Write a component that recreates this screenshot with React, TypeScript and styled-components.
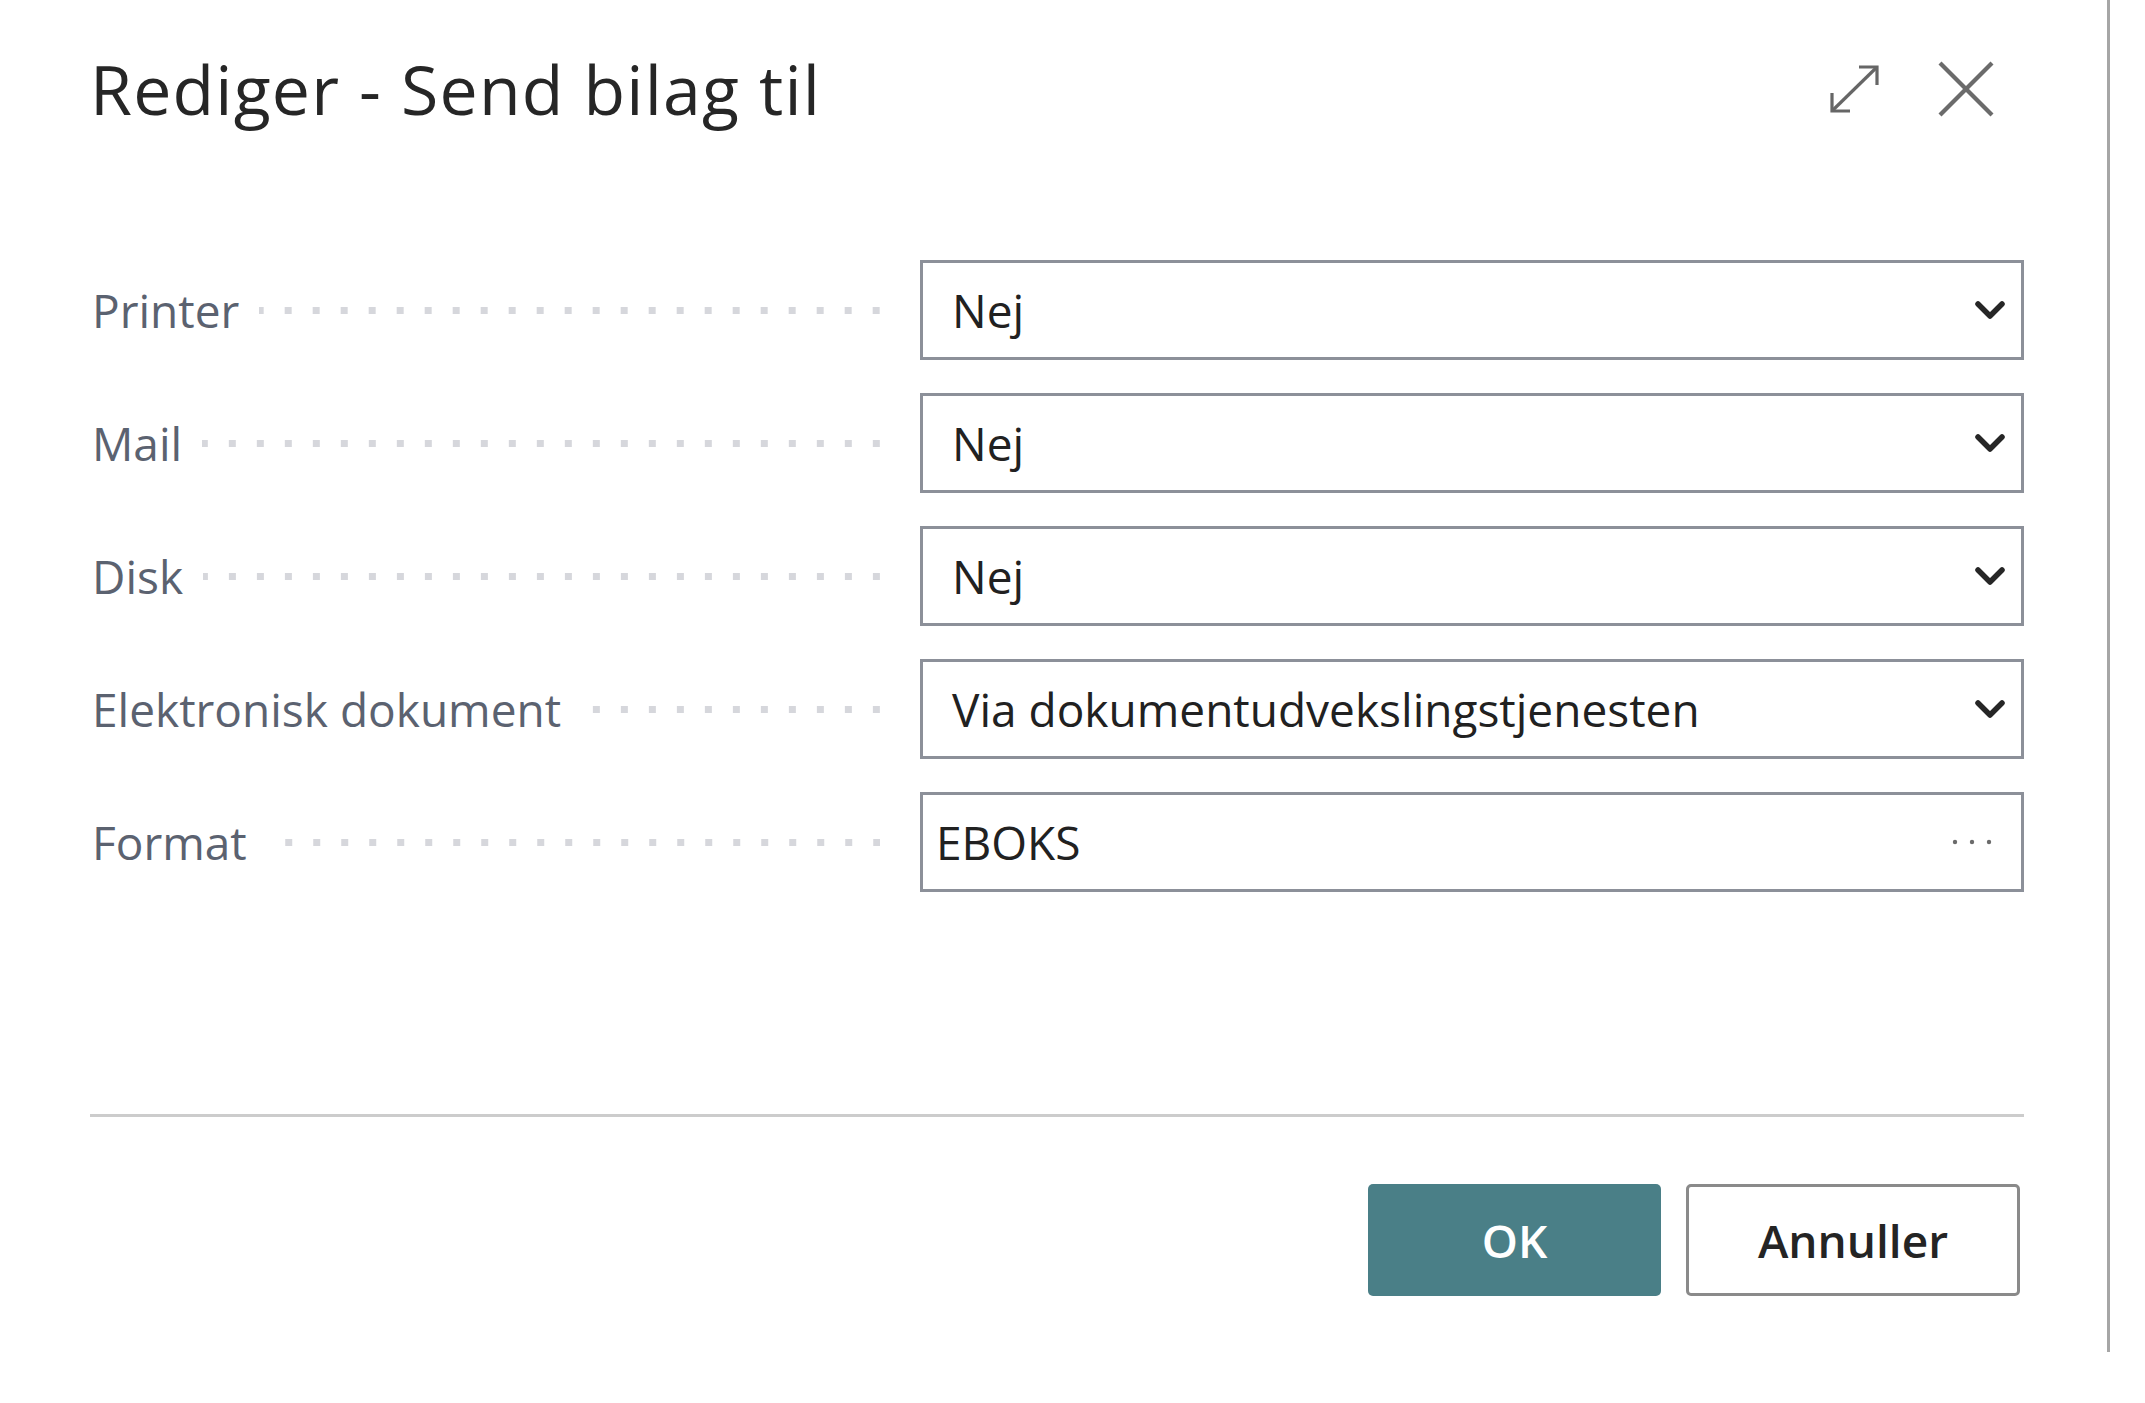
import React from 'react';
import styled, { createGlobalStyle } from 'styled-components';

const GlobalStyle = createGlobalStyle`
  html, body {
    margin: 0;
    padding: 0;
    background: #ffffff;
  }
  body {
    font-family: "Open Sans", "Noto Sans", "Liberation Sans", sans-serif;
  }
`;

const Page = styled.div`
  width: 2145px;
  height: 1403px;
  background: #ffffff;
  overflow: hidden;
`;

const Dialog = styled.div`
  box-sizing: border-box;
  width: 2110px;
  height: 1352px;
  border-right: 3px solid #a6a6a6;
  padding: 0 83px 0 92px;
  display: flex;
  flex-direction: column;
`;

const Header = styled.div`
  display: flex;
  align-items: center;
  justify-content: space-between;
  padding-top: 55px;
`;

const Title = styled.h1`
  margin: 0 0 0 -2px;
  font-size: 68px;
  line-height: 67px;
  font-weight: 400;
  letter-spacing: 1.2px;
  color: #262626;
`;

const HeaderIcons = styled.div`
  display: flex;
  align-items: center;
  gap: 58px;
  margin-right: 30px;
`;

const IconButton = styled.button`
  display: flex;
  align-items: center;
  justify-content: center;
  padding: 0;
  border: none;
  background: transparent;
  cursor: pointer;
`;

const Form = styled.div`
  display: flex;
  flex-direction: column;
  gap: 33px;
  margin-top: 138px;
`;

const Row = styled.div`
  display: grid;
  grid-template-columns: 1fr 1104px;
  height: 100px;
`;

const LabelCell = styled.div`
  display: flex;
  align-items: center;
  padding-right: 40px;
`;

const Label = styled.span`
  font-size: 46px;
  color: #5b6270;
  white-space: nowrap;
`;

const Leader = styled.span`
  flex: 1;
  height: 7px;
  margin-left: 20px;
  background-image: linear-gradient(to right, transparent 21px, #d6d7dc 21px);
  background-size: 28px 7px;
  background-position: right center;
  background-repeat: repeat-x;
`;

const Field = styled.div<{ $lookup?: boolean }>`
  box-sizing: border-box;
  height: 100px;
  display: flex;
  align-items: center;
  border: 3px solid #8c9099;
  padding: ${p => (p.$lookup ? '0 29px 0 13px' : '0 15px 0 29px')};
  background: #ffffff;
`;

const Value = styled.span`
  flex: 1;
  font-size: 46px;
  color: #212121;
  white-space: nowrap;
`;

const Separator = styled.div`
  height: 3px;
  background: #cccccc;
  margin: 222px 0 0 -2px;
`;

const Buttons = styled.div`
  display: flex;
  justify-content: flex-end;
  gap: 25px;
  margin-top: 67px;
  padding-right: 4px;
`;

const Button = styled.button<{ $primary?: boolean }>`
  box-sizing: border-box;
  height: 112px;
  width: ${p => (p.$primary ? '293px' : '334px')};
  border-radius: 5px;
  border: ${p => (p.$primary ? 'none' : '3px solid #8a8a8a')};
  background: ${p => (p.$primary ? '#4a7f87' : '#ffffff')};
  color: ${p => (p.$primary ? '#ffffff' : '#242424')};
  font-family: "Open Sans", "Noto Sans", sans-serif;
  font-size: 46px;
  font-weight: 600;
  cursor: pointer;
`;

const Chevron = () => (
  <svg width="32" height="20" viewBox="0 0 32 20">
    <polyline points="4,4 16,16 28,4" fill="none" stroke="#262626" strokeWidth="5.5" strokeLinecap="round" strokeLinejoin="round" />
  </svg>
);

const Ellipsis = () => (
  <svg width="40" height="6" viewBox="0 0 40 6">
    <circle cx="3" cy="3" r="2.2" fill="#6b6b6b" />
    <circle cx="20" cy="3" r="2.2" fill="#6b6b6b" />
    <circle cx="37" cy="3" r="2.2" fill="#6b6b6b" />
  </svg>
);

const ExpandIcon = () => (
  <svg width="51" height="50" viewBox="0 0 51 50">
    <g fill="none" stroke="#666666" strokeWidth="3.2">
      <line x1="4" y1="46" x2="47" y2="4" />
      <polyline points="30,3 48,3 48,21" />
      <polyline points="3,29 3,47 21,47" />
    </g>
  </svg>
);

const CloseIcon = () => (
  <svg width="56" height="56" viewBox="0 0 56 56">
    <g stroke="#6b6b6b" strokeWidth="4.2">
      <line x1="2" y1="2" x2="54" y2="54" />
      <line x1="54" y1="2" x2="2" y2="54" />
    </g>
  </svg>
);

const rows = [
  { label: 'Printer', value: 'Nej' },
  { label: 'Mail', value: 'Nej' },
  { label: 'Disk', value: 'Nej' },
  { label: 'Elektronisk dokument', value: 'Via dokumentudvekslingstjenesten' },
  { label: 'Format', value: 'EBOKS', lookup: true },
];

export default function App() {
  return (
    <Page>
      <GlobalStyle />
      <Dialog>
        <Header>
          <Title>Rediger - Send bilag til</Title>
          <HeaderIcons>
            <IconButton aria-label="Udvid"><ExpandIcon /></IconButton>
            <IconButton aria-label="Luk"><CloseIcon /></IconButton>
          </HeaderIcons>
        </Header>
        <Form>
          {rows.map(r => (
            <Row key={r.label}>
              <LabelCell>
                <Label>{r.label}</Label>
                <Leader />
              </LabelCell>
              <Field $lookup={r.lookup}>
                <Value>{r.value}</Value>
                {r.lookup ? <Ellipsis /> : <Chevron />}
              </Field>
            </Row>
          ))}
        </Form>
        <Separator />
        <Buttons>
          <Button $primary>OK</Button>
          <Button>Annuller</Button>
        </Buttons>
      </Dialog>
    </Page>
  );
}
